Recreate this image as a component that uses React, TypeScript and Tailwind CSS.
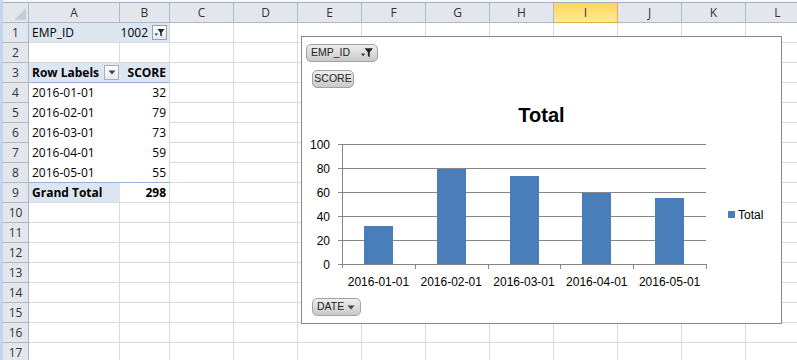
import React from "react";

const cols = [
  { l: "A", w: "w-[91px]" },
  { l: "B", w: "w-[50px]" },
  { l: "C", w: "w-[64px]" },
  { l: "D", w: "w-[64px]" },
  { l: "E", w: "w-[64px]" },
  { l: "F", w: "w-[64px]" },
  { l: "G", w: "w-[64px]" },
  { l: "H", w: "w-[64px]" },
  { l: "I", w: "w-[64px]" },
  { l: "J", w: "w-[64px]" },
  { l: "K", w: "w-[64px]" },
  { l: "L", w: "w-[64px]" },
];

const data = [
  { date: "2016-01-01", score: 32 },
  { date: "2016-02-01", score: 79 },
  { date: "2016-03-01", score: 73 },
  { date: "2016-04-01", score: 59 },
  { date: "2016-05-01", score: 55 },
];

const GRID = "border-r border-b border-[#dadada]";

function Funnel({ big }: { big?: boolean }) {
  const s = big ? 14 : 11;
  return (
    <svg width={s} height={big ? 12 : 10} viewBox="0 0 11 10">
      <path d="M0.5 5.5h3.5l-1.75 2.2z" fill="#333" />
      <path d="M3.5 1h7l-2.7 3.4v4.2l-1.6-1.1v-3.1z" fill="#222" />
    </svg>
  );
}

function DownArrow() {
  return (
    <svg width="8" height="5" viewBox="0 0 8 5">
      <path d="M0.5 0.5h7l-3.5 4z" fill="#444" />
    </svg>
  );
}

// pivot table cells: returns [classes, content]
function cellFor(row: number, col: string): [string, React.ReactNode] {
  if (row === 1 && col === "A") return ["bg-[#dce6f1] border-b border-[#dadada] pl-[3px]", "EMP_ID"];
  if (row === 1 && col === "B")
    return [
      "bg-[#dce6f1] border-r border-b border-[#dadada] justify-end pr-[2px]",
      <>
        <span>1002</span>
        <span className="ml-[4px] w-[15px] h-[15px] border border-[#97a1b0] bg-gradient-to-b from-[#ffffff] to-[#e4e7ec] flex items-center justify-center">
          <Funnel />
        </span>
      </>,
    ];
  if (row === 3 && col === "A")
    return [
      "bg-[#dce6f1] border-b border-[#95b3d7] pl-[3px] pr-[1px] justify-between font-bold",
      <>
        <span>Row Labels</span>
        <span className="w-[15px] h-[15px] border border-[#a7afbb] bg-gradient-to-b from-[#ffffff] to-[#e4e7ec] flex items-center justify-center">
          <DownArrow />
        </span>
      </>,
    ];
  if (row === 3 && col === "B")
    return ["bg-[#dce6f1] border-r border-r-[#dadada] border-b border-b-[#95b3d7] justify-end pr-[3px] font-bold", "SCORE"];
  if (row >= 4 && row <= 8) {
    const d = data[row - 4];
    const bottom = row === 8;
    if (col === "A") return [(bottom ? "border-b border-[#95b3d7] " : "") + "pl-[3px]", d.date];
    if (col === "B")
      return [
        (bottom ? "border-b border-b-[#95b3d7] " : "") + "border-r border-r-[#dadada] justify-end pr-[3px]",
        String(d.score),
      ];
  }
  if (row === 9 && col === "A") return ["bg-[#dce6f1] border-b border-[#dadada] pl-[3px] font-bold", "Grand Total"];
  if (row === 9 && col === "B") return [GRID + " justify-end pr-[3px] font-bold", "298"];
  return [GRID, null];
}

function PillButton({ children, className }: { children: React.ReactNode; className: string }) {
  return (
    <div
      className={
        "h-[18px] rounded-[5px] border border-[#a2a2a2] bg-gradient-to-b from-[#eeeeee] to-[#c9c9c9] flex items-center text-[10.5px] text-[#222] font-['Liberation_Sans',sans-serif] " +
        className
      }
    >
      {children}
    </div>
  );
}

function Chart() {
  const x0 = 40;
  const x1 = 404;
  const yTop = 17;
  const yBot = 137;
  const step = (x1 - x0) / data.length;
  return (
    <div className="absolute left-[301px] top-[36px] w-[481px] h-[288px] border border-[#878787] bg-white flex flex-col">
      <div className="pt-[7px] pl-[4px] flex">
        <PillButton className="w-[72px] pl-[4px] pr-[3px] justify-between">
          <span>EMP_ID</span>
          <Funnel big />
        </PillButton>
      </div>
      <div className="mt-[8px] pl-[10px] flex">
        <PillButton className="w-[42px] justify-center">SCORE</PillButton>
      </div>
      <div className="mt-[15px] h-[24px] leading-[24px] text-center text-[20px] font-bold text-black font-['Liberation_Sans',sans-serif]">
        Total
      </div>
      <svg width="479" height="165" viewBox="0 0 479 165" className="font-['Liberation_Sans',sans-serif]">
        {[0, 20, 40, 60, 80, 100].map((v) => {
          const y = yBot - v * 1.2;
          return (
            <g key={v}>
              <line x1={x0 - 4} x2={x1} y1={y + 0.5} y2={y + 0.5} stroke="#868686" strokeWidth="1" />
              <text x={28} y={y + 4.5} textAnchor="end" fontSize="12" fill="#000">
                {v}
              </text>
            </g>
          );
        })}
        <line x1={x0 + 0.5} x2={x0 + 0.5} y1={yTop} y2={yBot + 4} stroke="#868686" strokeWidth="1" />
        {data.map((d, i) => {
          const cx = x0 + step * (i + 0.5);
          const h = Math.round(d.score * 1.2);
          return (
            <g key={d.date}>
              <rect x={Math.round(cx - 14.5)} y={yBot - h} width="29" height={h} fill="#4a7ebb" />
              <line
                x1={Math.round(x0 + step * (i + 1)) + 0.5}
                x2={Math.round(x0 + step * (i + 1)) + 0.5}
                y1={yBot}
                y2={yBot + 5}
                stroke="#868686"
              />
              <text x={cx} y={159} textAnchor="middle" fontSize="12" fill="#000">
                {d.date}
              </text>
            </g>
          );
        })}
        <rect x="426" y="84" width="7" height="7" fill="#4a7ebb" />
        <text x="436" y="92" fontSize="12" fill="#000">
          Total
        </text>
      </svg>
      <div className="mt-[6px] pl-[10px] flex">
        <PillButton className="w-[49px] pl-[4px] pr-[5px] justify-between">
          <span>DATE</span>
          <DownArrow />
        </PillButton>
      </div>
    </div>
  );
}

export default function App() {
  const rows = Array.from({ length: 17 }, (_, i) => i + 1);
  return (
    <div className="relative w-[797px] h-[360px] overflow-hidden bg-white font-['Open_Sans',sans-serif] text-[12px] text-black">
      <div className="flex h-full">
        <div className="w-[3px] h-full bg-[#c3d5ec]" />
        <div className="flex-1 min-w-0">
          <div className="h-[3px] bg-[#f3f5f8] border-b border-[#a6aebb]" />
          {/* column headers */}
          <div className="flex h-[20px]">
            <div className="w-[26px] shrink-0 relative border-r border-b border-[#b1b8c5] bg-[#e4e6ee]">
              <div className="absolute right-[2px] bottom-[2px] w-0 h-0 border-l-[12px] border-l-transparent border-b-[12px] border-b-[#c9ccd3]" />
            </div>
            {cols.map((c) =>
              c.l === "I" ? (
                <div
                  key={c.l}
                  className={c.w + " shrink-0 border-r border-b border-[#e9ac43] bg-gradient-to-b from-[#ffd45c] to-[#ffeb94] flex items-center justify-center text-[#333]"}
                >
                  {c.l}
                </div>
              ) : (
                <div
                  key={c.l}
                  className={c.w + " shrink-0 border-r border-b border-[#b1b8c5] bg-[#e4e6ee] flex items-center justify-center text-[#333]"}
                >
                  {c.l}
                </div>
              )
            )}
          </div>
          {rows.map((r) => (
            <div key={r} className="flex h-[20px]">
              <div className="w-[26px] shrink-0 border-r border-b border-[#b1b8c5] bg-[#e4e6ee] flex items-center justify-center text-[#333]">
                {r}
              </div>
              {cols.map((c) => {
                const [cls, content] = cellFor(r, c.l);
                return (
                  <div key={c.l} className={c.w + " shrink-0 flex items-center whitespace-nowrap overflow-hidden " + cls}>
                    {content}
                  </div>
                );
              })}
            </div>
          ))}
        </div>
      </div>
      <Chart />
    </div>
  );
}
